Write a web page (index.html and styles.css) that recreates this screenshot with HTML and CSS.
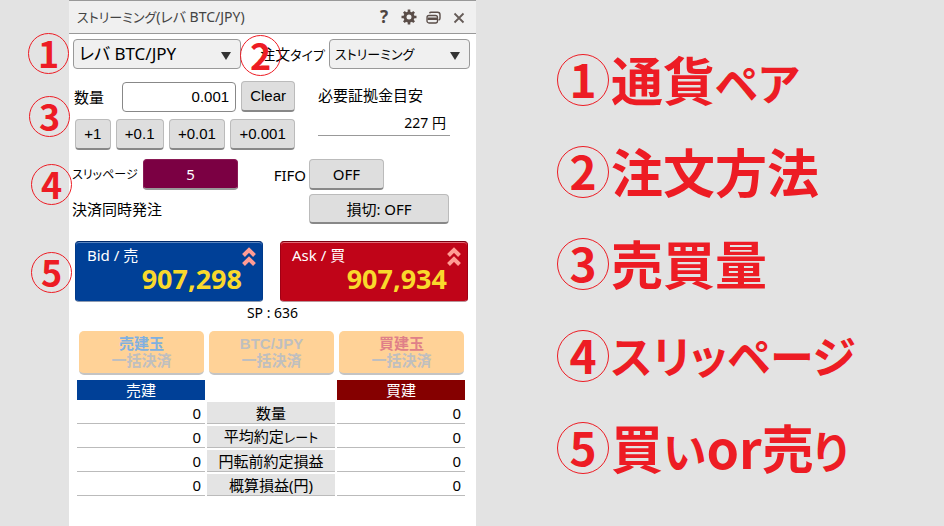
FILE: index.html
```html
<!DOCTYPE html>
<html lang="ja">
<head>
    <meta charset="UTF-8">
    <meta name="viewport" content="width=device-width, initial-scale=1.0">
    <title>ストリーミング(レバ BTC/JPY)</title>
    <link rel="stylesheet" href="styles.css">
</head>
<body>
    <main class="panel">
        <header class="panel__head">
            <h1 class="panel__title"><span class="kana">ストリーミング</span>(レバ BTC/JPY)</h1>
            <button class="icon" type="button" aria-label="ヘルプ">?</button>
            <button class="icon" type="button" aria-label="設定">
                <svg width="16" height="16" viewBox="0 0 16 16">
                    <circle cx="8" cy="8" r="4" fill="none" stroke="#5a4d48" stroke-width="3"/>
                    <path d="M8 0.5v3M8 12.5v3M0.5 8h3M12.5 8h3M2.9 2.9l2 2M11.1 11.1l2 2M2.9 13.1l2-2M11.1 4.9l2-2" stroke="#5a4d48" stroke-width="2.6"/>
                </svg>
            </button>
            <button class="icon" type="button" aria-label="ウィンドウ">
                <svg width="16" height="16" viewBox="0 0 16 16">
                    <path d="M3.5 4.2Q4 3.2 5 3.200h6.500q2.500 0 2.500 2.500v3.500q0 1.500-1.500 2" fill="none" stroke="#5a4d48" stroke-width="1.4"/>
                    <rect x="1" y="6.500" width="10.500" height="7.500" rx="2" fill="#efefef" stroke="#5a4d48" stroke-width="1.3"/>
                    <path d="M1.500 8.500h9.500v2.500H1.500z" fill="#5a4d48"/>
                </svg>
            </button>
            <button class="icon" type="button" aria-label="閉じる">
                <svg width="16" height="16" viewBox="0 0 16 16">
                    <path d="M3.5 4.500l9 9M12.5 4.500l-9 9" stroke="#665c58" stroke-width="1.8"/>
                </svg>
            </button>
        </header>

        <div class="pair marked">
            <span class="mark mark--pair">1</span>
            <span class="select pair__symbol">
                <select class="select__field select__field--big" aria-label="通貨ペア"><option>レバ BTC/JPY</option></select>
            </span>
            <label class="pair__label" for="type">注文<span class="kana">タイプ</span></label>
            <span class="mark mark--type">2</span>
            <span class="select pair__type">
                <select class="select__field" id="type"><option>ストリーミング</option></select>
            </span>
        </div>

        <div class="amount marked">
            <span class="mark mark--amount">3</span>
            <div class="amount__left">
                <div class="amount__row">
                    <label class="amount__label" for="amount">数量</label>
                    <input class="amount__input" id="amount" type="text" value="0.001">
                    <button class="btn btn--num amount__clear" type="button">Clear</button>
                </div>
                <div class="amount__steps">
                    <button class="btn btn--num" type="button">+1</button>
                    <button class="btn btn--num" type="button">+0.1</button>
                    <button class="btn btn--num" type="button">+0.01</button>
                    <button class="btn btn--num" type="button">+0.001</button>
                </div>
            </div>
            <div class="margin">
                <div class="margin__label">必要証拠金目安</div>
                <div class="margin__value">227 円</div>
            </div>
        </div>

        <div class="options marked">
            <span class="mark mark--slip">4</span>
            <label class="options__slip" for="slip">スリッページ</label>
            <button class="btn btn--slip" id="slip" type="button">5</button>
            <label class="options__fifo" for="fifo">FIFO</label>
            <button class="btn options__off" id="fifo" type="button">OFF</button>
            <label class="options__settle" for="settle">決済同時発注</label>
            <button class="btn btn--low" id="settle" type="button">損切: OFF</button>
        </div>

        <div class="quotes marked">
            <span class="mark mark--quote">5</span>
            <button class="quote quote--bid" type="button">
                <span class="quote__name">Bid / 売</span>
                <svg class="quote__arrow" width="14" height="20" viewBox="0 0 14 20">
                    <path d="M1.5 8.5L7 3l5.500 5.500M1.500 17.500L7 12l5.500 5.500" fill="none" stroke="#ff9c94" stroke-width="4"/>
                </svg>
                <span class="quote__price">907,298</span>
            </button>
            <button class="quote quote--ask" type="button">
                <span class="quote__name">Ask / 買</span>
                <svg class="quote__arrow" width="14" height="20" viewBox="0 0 14 20">
                    <path d="M1.5 8.5L7 3l5.500 5.500M1.500 17.500L7 12l5.500 5.500" fill="none" stroke="#ff9c94" stroke-width="4"/>
                </svg>
                <span class="quote__price">907,934</span>
            </button>
        </div>
        <div class="spread">SP : 636</div>

        <div class="closes">
            <button class="close" type="button"><span class="close__sell">売建玉</span><span>一括決済</span></button>
            <button class="close" type="button"><span class="close__pair">BTC/JPY</span><span>一括決済</span></button>
            <button class="close" type="button"><span class="close__buy">買建玉</span><span>一括決済</span></button>
        </div>

        <table class="positions">
            <thead>
                <tr><th class="positions__sell">売建</th><td class="positions__blank"></td><th class="positions__buy">買建</th></tr>
            </thead>
            <tbody>
                <tr><td>0</td><th>数量</th><td>0</td></tr>
                <tr><td>0</td><th>平均約定<span class="kana">レート</span></th><td>0</td></tr>
                <tr><td>0</td><th>円転前約定損益</th><td>0</td></tr>
                <tr><td>0</td><th>概算損益(円)</th><td>0</td></tr>
            </tbody>
        </table>
    </main>

    <ul class="legend">
        <li class="legend__item"><span class="legend__num">1</span><span>通貨<span class="legend__kana">ペア</span></span></li>
        <li class="legend__item"><span class="legend__num">2</span><span>注文方法</span></li>
        <li class="legend__item"><span class="legend__num">3</span><span>売買量</span></li>
        <li class="legend__item"><span class="legend__num">4</span><span class="legend__kana">スリッページ</span></li>
        <li class="legend__item"><span class="legend__num">5</span><span>買<span class="legend__kana">い</span>or売<span class="legend__kana">り</span></span></li>
    </ul>
</body>
</html>
```
FILE: styles.css
```css
*, *::before, *::after {
    box-sizing: border-box;
}
body {
    display: grid;
    grid-template-columns: minmax(0, 407fr) minmax(0, 468fr);
    min-height: 100vh;
    margin: 0;
    padding-left: 69px;
    background-color: #e3e3e3;
    color: #000;
    font-family: 'Noto Sans', 'Noto Sans CJK JP', sans-serif;
    font-size: 15px;
    line-height: 20px;
    font-feature-settings: "palt";
}
button, input, select {
    margin: 0;
    color: inherit;
    font: inherit;
    font-feature-settings: inherit;
}
button {
    cursor: pointer;
}
.kana {
    font-size: 13px;
}
.panel {
    background-color: #fff;
    white-space: nowrap;
}
.panel__head {
    display: flex;
    align-items: center;
    gap: 9px;
    height: 34px;
    padding: 0 9px 0 8px;
    border-top: 1px solid #999;
    border-bottom: 1px solid #999;
    background-color: #f0f0f0;
}
.panel__title {
    flex: 1;
    margin: 0;
    color: #444;
    font-size: 14px;
    font-weight: normal;
}
.icon {
    width: 16px;
    height: 16px;
    padding: 0;
    border: none;
    background: none;
    color: #4d4542;
    font-weight: bold;
    font-size: 17px;
    line-height: 16px;
}
.icon svg {
    display: block;
}

/* numbered markers over the panel */
.marked {
    position: relative;
}
.mark {
    position: absolute;
    z-index: 1;
    width: 41px;
    height: 41px;
    border: 1px solid #ed1c24;
    border-radius: 50%;
    color: #ed1c24;
    font-family: 'Noto Sans CJK JP', sans-serif;
    font-size: 36px;
    font-weight: bold;
    line-height: 36px;
    text-align: center;
}
.mark--pair {
    left: -41px;
    top: -1px;
}
.mark--type {
    left: 171px;
    top: 1px;
}
.mark--amount {
    left: -40px;
    top: 27px;
}
.mark--slip {
    left: -38px;
    top: 14px;
}
.mark--quote {
    left: -38px;
    top: 28px;
}

.pair {
    display: flex;
    align-items: center;
    gap: 4px;
    padding: 5px 6px 0 4px;
}
.pair__symbol {
    flex: 168;
}
.pair__type {
    flex: 141;
}
.pair__label {
    width: 80px;
    text-align: right;
}
.select {
    position: relative;
}
.select::after {
    content: "";
    position: absolute;
    right: 10px;
    top: 13px;
    border: 5px solid transparent;
    border-top: 8px solid #333;
    border-bottom: none;
    pointer-events: none;
}
.select__field {
    appearance: none;
    display: block;
    width: 100%;
    height: 30px;
    padding: 0 20px 0 5px;
    border: 1px solid #999;
    border-radius: 4px;
    background-color: #f0f0f0;
    font-size: 13px;
}
.select__field--big {
    font-size: 17px;
}

.btn {
    height: 31px;
    padding: 0;
    border: 1px solid #bbb;
    border-bottom: 2px solid #888;
    border-radius: 4px;
    background-color: #dedede;
}
.btn--num {
    padding: 0 8px;
    font-family: 'Liberation Sans', sans-serif;
}
.btn--slip {
    border-color: #8a1a55;
    border-bottom-color: #999;
    background-color: #7b0043;
    color: #fff;
}
.btn--low {
    height: 30px;
}

.amount {
    display: grid;
    grid-template-columns: minmax(0, 221fr) minmax(0, 132fr);
    gap: 23px;
    padding: 12px 26px 0 5px;
}
.amount__row {
    display: flex;
    align-items: center;
    gap: 5px;
}
.amount__label {
    width: 43px;
}
.amount__input {
    flex: 1;
    min-width: 0;
    height: 30px;
    padding: 0 6px;
    border: 1px solid #888;
    border-radius: 4px;
    font-family: 'Liberation Sans', sans-serif;
    text-align: right;
}
.amount__steps {
    display: flex;
    gap: 5px;
    padding: 7px 0 0 1px;
}
.amount__steps .btn {
    flex: auto;
}
.margin__label {
    padding-top: 4px;
}
.margin__value {
    margin-top: 8px;
    padding: 0 4px 2px;
    border-bottom: 1px solid #999;
    font-size: 14px;
    text-align: right;
}

.options {
    display: grid;
    grid-template-columns: 71px 95px 1fr 140px;
    row-gap: 4px;
    align-items: center;
    padding: 9px 27px 0 3px;
}
.options__slip {
    font-size: 12px;
}
.options__fifo {
    padding-right: 3px;
    text-align: right;
}
.options__off {
    width: 75px;
}
.options__settle {
    grid-column: span 3;
}

.quotes {
    display: flex;
    gap: 17px;
    padding: 17px 8px 0 6px;
}
.quote {
    display: grid;
    grid-template-columns: 1fr auto;
    grid-template-rows: 20px 28px;
    align-content: start;
    flex: 1;
    height: 61px;
    padding: 3px 6px 0 11px;
    border: 1px solid;
    border-radius: 4px;
    color: #fff;
    text-align: left;
}
.quote--bid {
    border-color: #002a6b #003a8a #8f9bb0;
    background-color: #004097;
    box-shadow: inset 0 1px #5c86c0;
}
.quote--ask {
    border-color: #7a0010 #a00014 #b89499;
    background-color: #c00418;
    box-shadow: inset 0 1px #e06a76;
}
.quote__arrow {
    grid-row: span 2;
    margin-top: 2px;
}
.quote__price {
    color: #f9d92c;
    font-size: 27px;
    font-weight: bold;
    line-height: 28px;
    text-align: right;
}
.spread {
    padding-top: 1px;
    font-size: 14px;
    text-align: center;
}

.closes {
    display: flex;
    gap: 5px;
    padding: 8px 12px 0 10px;
}
.close {
    display: grid;
    flex: 1;
    grid-auto-rows: 17px;
    align-content: center;
    height: 44px;
    padding: 0;
    border: none;
    border-bottom: 2px solid #c4c4c4;
    border-radius: 5px;
    background-color: #ffd297;
    color: #bfbfbf;
    font-weight: bold;
    line-height: 17px;
}
.close__sell {
    color: #80b0e0;
}
.close__pair {
    font-family: 'Liberation Sans', sans-serif;
}
.close__buy {
    color: #df8088;
}

.positions {
    width: calc(100% - 15px);
    margin: 3px 9px 0 6px;
    border-spacing: 2px;
    table-layout: fixed;
}
.positions th, .positions td {
    height: 22px;
    padding: 0;
    border-bottom: 1px solid #bbb;
    font-weight: normal;
    line-height: 18px;
}
.positions td {
    padding-right: 4px;
    text-align: right;
}
.positions tbody th {
    background-color: #e4e4e4;
}
.positions thead th, .positions .positions__blank {
    height: 20px;
    border: none;
    color: #fff;
}
.positions__sell {
    background-color: #004097;
}
.positions__buy {
    background-color: #850000;
}

.legend {
    display: flex;
    flex-direction: column;
    gap: 40px;
    margin: 0;
    padding: 54px 0 0 81px;
    color: #ed1c24;
    font-family: 'Noto Sans CJK JP', sans-serif;
    font-size: 52px;
    font-weight: bold;
    line-height: 50px;
    list-style: none;
    white-space: nowrap;
}
.legend__item {
    display: flex;
    gap: 2px;
    height: 52px;
}
.legend__kana {
    font-size: 44px;
}
.legend__num {
    width: 52px;
    height: 52px;
    border: 1px solid #ed1c24;
    border-radius: 50%;
    font-size: 46px;
    line-height: 46px;
    text-align: center;
}
```
